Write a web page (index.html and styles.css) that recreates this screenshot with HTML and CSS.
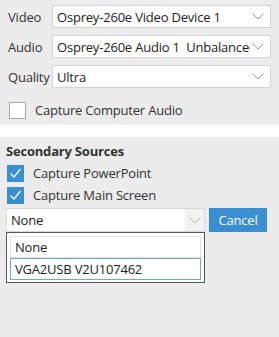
FILE: index.html
```html
<!DOCTYPE html>
<html lang="en">
<head>
  <meta charset="UTF-8" />
  <title>Capture Sources</title>
  <link rel="stylesheet" href="styles.css">
</head>
<body>
  <div class="primary">
    <div class="field">
      <span class="label">Video</span>
      <div class="select">
        <span class="value">Osprey-260e Video Device 1</span>
        <svg class="chevron" width="12" height="7" viewBox="0 0 12 7"><path d="M0.5 0.5 L6 6 L11.5 0.5" fill="none" stroke="#9a9a9a" stroke-width="1"/></svg>
      </div>
    </div>
    <div class="field">
      <span class="label">Audio</span>
      <div class="select">
        <span class="value">Osprey-260e Audio 1&nbsp; Unbalanced</span>
        <svg class="chevron" width="12" height="7" viewBox="0 0 12 7"><path d="M0.5 0.5 L6 6 L11.5 0.5" fill="none" stroke="#9a9a9a" stroke-width="1"/></svg>
      </div>
    </div>
    <div class="field">
      <span class="label">Quality</span>
      <div class="select">
        <span class="value">Ultra</span>
        <svg class="chevron" width="12" height="7" viewBox="0 0 12 7"><path d="M0.5 0.5 L6 6 L11.5 0.5" fill="none" stroke="#9a9a9a" stroke-width="1"/></svg>
      </div>
    </div>
    <label class="check check-audio">
      <span class="box"></span>
      <span>Capture Computer Audio</span>
    </label>
  </div>

  <div class="secondary">
    <div class="heading">Secondary Sources</div>
    <label class="check">
      <span class="box checked">
        <svg width="17" height="17" viewBox="0 0 17 17"><path d="M3.5 8.5 L7 12 L13.5 4" fill="none" stroke="#fff" stroke-width="1.3"/></svg>
      </span>
      <span>Capture PowerPoint</span>
    </label>
    <label class="check">
      <span class="box checked">
        <svg width="17" height="17" viewBox="0 0 17 17"><path d="M3.5 8.5 L7 12 L13.5 4" fill="none" stroke="#fff" stroke-width="1.3"/></svg>
      </span>
      <span>Capture Main Screen</span>
    </label>
    <div class="source-row">
      <div class="dropdown">
        <div class="select open">
          <span class="value">None</span>
          <span class="arrow-box">
            <svg class="chevron" width="12" height="7" viewBox="0 0 12 7"><path d="M0.5 0.5 L6 6 L11.5 0.5" fill="none" stroke="#b5b5b5" stroke-width="1"/></svg>
          </span>
        </div>
        <div class="menu">
          <div class="option">None</div>
          <div class="option focused">VGA2USB V2U107462</div>
        </div>
      </div>
      <button class="cancel">Cancel</button>
    </div>
  </div>
</body>
</html>
```

FILE: styles.css
```css
body {
  margin: 0;
  width: 279px;
  height: 337px;
  background: #fff;
  font-family: "Open Sans", "Noto Sans", sans-serif;
  font-size: 13px;
  letter-spacing: -0.2px;
  color: #222;
  overflow: hidden;
}
.primary {
  background: #ececec;
  padding: 5px 8px 0 8px;
  height: 119px;
  border-bottom: 1px solid #f4f4f4;
}
.field {
  display: flex;
  align-items: center;
  height: 23px;
  margin-bottom: 7px;
}
.label {
  width: 44px;
  color: #333;
}
.select {
  flex: 1;
  height: 21px;
  background: #fff;
  border: 1px solid #d4d4d4;
  display: flex;
  align-items: center;
  padding-left: 4px;
  overflow: hidden;
  white-space: nowrap;
}
.value {
  flex: 1;
  overflow: hidden;
}
.chevron {
  flex: none;
  margin: 0 6px 0 2px;
}
.check {
  display: flex;
  align-items: center;
  height: 22px;
  color: #333;
}
.check-audio {
  margin-top: 11px;
}
.box {
  width: 15px;
  height: 15px;
  border: 1px solid #a8a8a8;
  background: #fff;
  margin-right: 9px;
  flex: none;
  display: flex;
}
.check-audio .box {
  margin-left: 1px;
}
.box.checked {
  width: 17px;
  height: 17px;
  border: none;
  background: #3a8fd3;
}
.secondary {
  margin-top: 12px;
  background: #ececec;
  height: 201px;
  padding: 5px 7px 0 6px;
}
.heading {
  font-weight: bold;
  color: #333;
  height: 18px;
  margin-bottom: 2px;
}
.secondary .check {
  padding-left: 1px;
}
.source-row {
  display: flex;
  align-items: flex-start;
  margin-top: 2px;
}
.dropdown {
  width: 199px;
}
.dropdown .select {
  height: 22px;
  border-color: #d8d8d8;
  padding-right: 0;
}
.arrow-box {
  width: 19px;
  height: 22px;
  background: #f2f2f2;
  display: flex;
  align-items: center;
  justify-content: center;
}
.arrow-box .chevron {
  margin: 0;
}
.menu {
  border: 1px solid #555;
  background: #fff;
  padding: 3px 3px 2px 3px;
}
.option {
  height: 20px;
  line-height: 20px;
  padding-left: 4px;
  border: 1px solid #e2e2e2;
  color: #222;
}
.option.focused {
  border-color: #6aaad4;
}
.cancel {
  margin-left: 4px;
  width: 58px;
  height: 24px;
  background: #3a8fd3;
  color: #fff;
  border: none;
  font-family: inherit;
  font-size: 13px;
  letter-spacing: inherit;
  padding: 0;
}
```
